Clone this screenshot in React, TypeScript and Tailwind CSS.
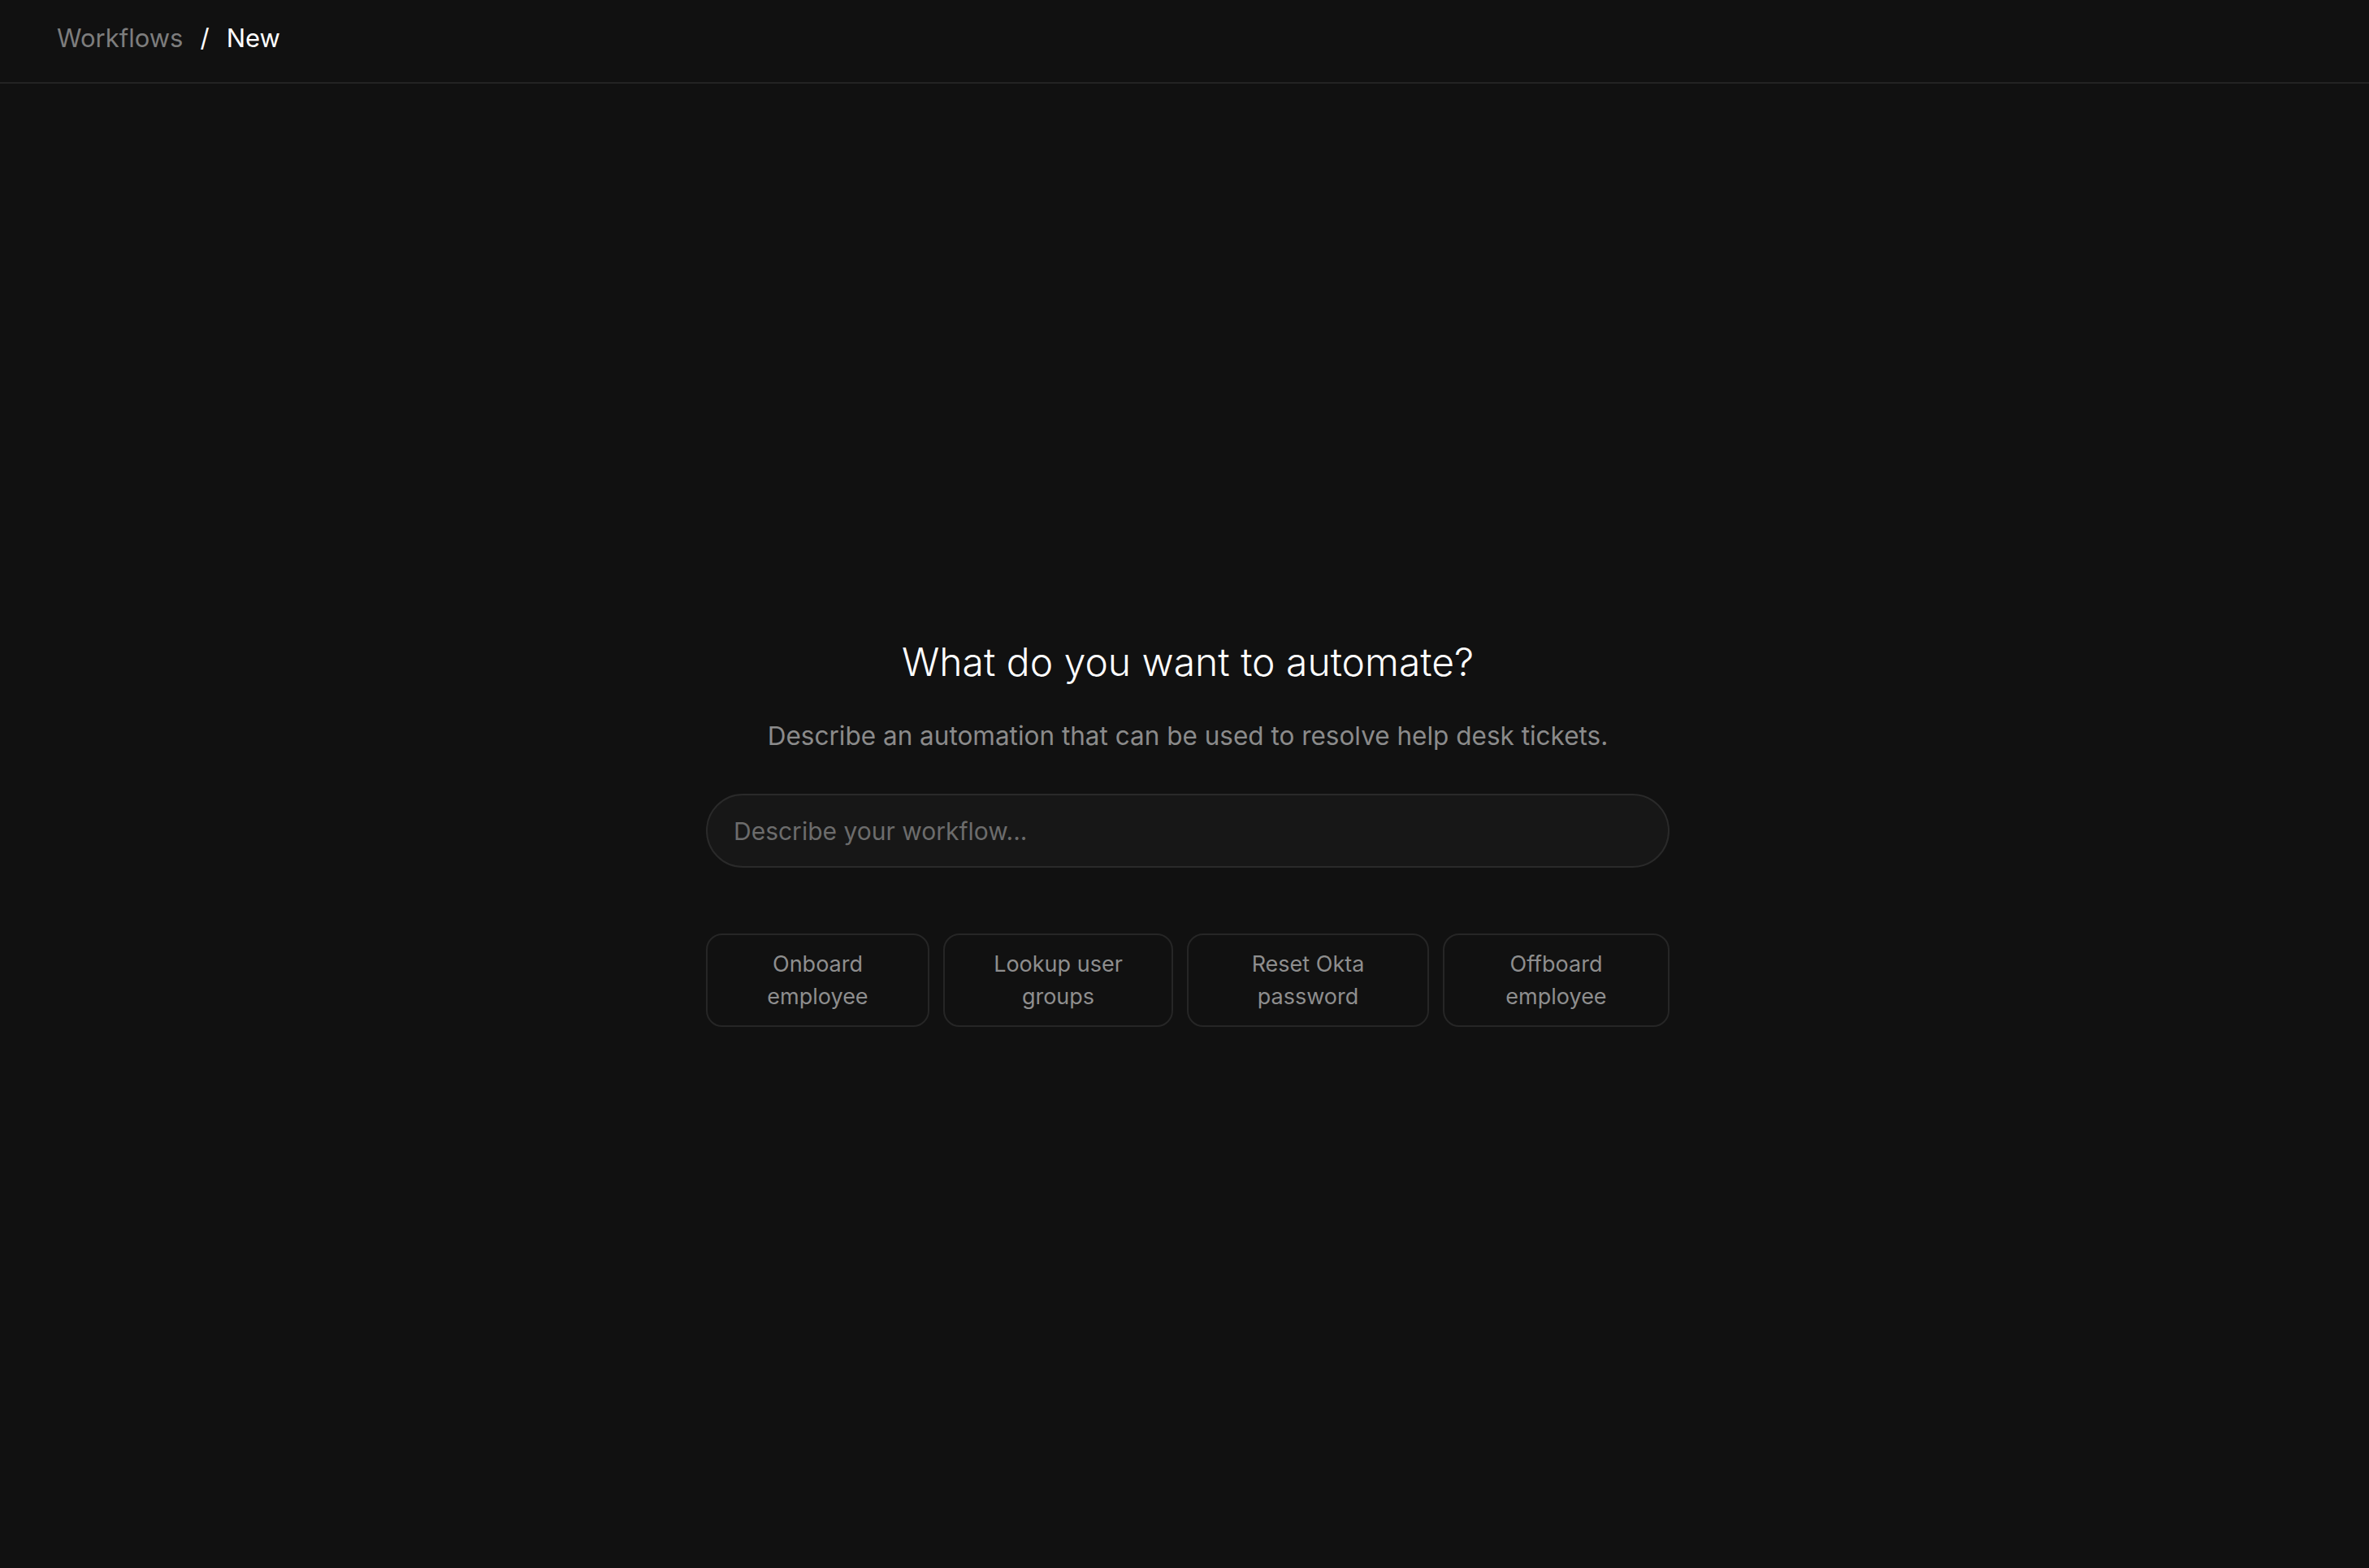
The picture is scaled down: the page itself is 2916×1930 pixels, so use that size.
export default function App() {
  const suggestions = [
    { label: "Onboard employee", width: "w-[275px]" },
    { label: "Lookup user groups", width: "w-[283px]" },
    { label: "Reset Okta password", width: "w-[298px]" },
    { label: "Offboard employee", width: "w-[279px]" },
  ];

  return (
    <div className="min-h-screen flex flex-col bg-[#111111] font-['Inter',sans-serif]">
      <header className="h-[103px] shrink-0 flex items-center pl-[70px] pb-[6px] border-b-2 border-[#232323]">
        <nav className="flex items-center text-[31px]">
          <span className="text-[#7d7d7d]">Workflows</span>
          <span className="text-white mx-[21px]">/</span>
          <span className="text-white">New</span>
        </nav>
      </header>

      <main className="flex-1 flex items-center justify-center pt-[16px] pl-[8px]">
        <div className="w-[1186px] flex flex-col items-center">
          <h1 className="text-[48px] font-light text-white leading-tight">
            What do you want to automate?
          </h1>
          <p className="mt-[37px] text-[31.5px] text-[#8b8b8b]">
            Describe an automation that can be used to resolve help desk tickets.
          </p>
          <input
            type="text"
            placeholder="Describe your workflow..."
            className="mt-[48px] w-full h-[91px] rounded-full bg-[#171717] border-2 border-[#2a2a2a] px-[32px] text-[30px] text-white placeholder:text-[#6c6c6c] outline-none"
          />
          <div className="mt-[81px] w-full flex justify-between">
            {suggestions.map((s) => (
              <button
                key={s.label}
                className={`${s.width} h-[115px] rounded-[20px] border-2 border-[#262626] px-[40px] text-[27px] leading-[40px] text-[#8e8e8e] text-center`}
              >
                {s.label}
              </button>
            ))}
          </div>
        </div>
      </main>
    </div>
  );
}
